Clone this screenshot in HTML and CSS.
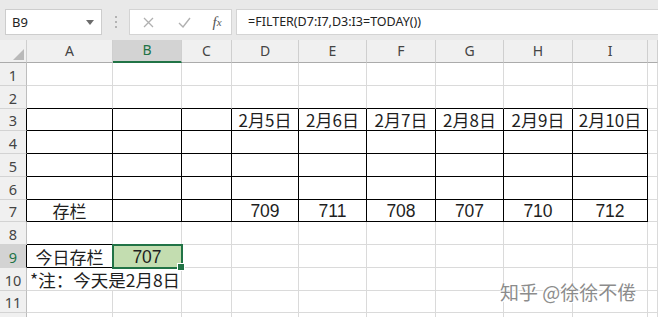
FILE: index.html
```html
<!DOCTYPE html>
<html lang="zh-CN">
<head>
    <meta charset="UTF-8">
    <title>FILTER</title>
    <link rel="stylesheet" href="styles.css">
</head>
<body>
    <div class="app">
        <div class="formula-bar">
            <div class="name-box">
                <span>B9</span>
                <svg class="drop" width="8" height="5" viewBox="0 0 8 5"><path d="M0 0h8L4 5z" fill="#6b6b6b"/></svg>
            </div>
            <div class="grip"><i></i><i></i><i></i></div>
            <div class="fx-buttons">
                <span class="btn">
                    <svg width="11" height="11" viewBox="0 0 11 11"><path d="M1 1l9 9M10 1l-9 9" stroke="#b0b0b0" stroke-width="1.3" fill="none"/></svg>
                </span>
                <span class="btn">
                    <svg width="13" height="11" viewBox="0 0 13 11"><path d="M1 6l4 4 7-9" stroke="#b0b0b0" stroke-width="1.4" fill="none"/></svg>
                </span>
                <span class="btn fx">f<sub>x</sub></span>
            </div>
            <div class="formula">=FILTER(D7:I7,D3:I3=TODAY())</div>
        </div>

        <div class="sheet">
            <div class="row head">
                <div class="corner"><svg width="11" height="11" viewBox="0 0 11 11"><path d="M11 0v11H0z" fill="#b9b9b9"/></svg></div>
                <div>A</div><div class="sel">B</div><div>C</div><div>D</div><div>E</div><div>F</div><div>G</div><div>H</div><div>I</div><div></div>
            </div>
            <div class="row">
                <div class="rh">1</div>
                <div></div><div></div><div></div><div></div><div></div><div></div><div></div><div></div><div></div><div></div>
            </div>
            <div class="row">
                <div class="rh">2</div>
                <div class="bb"></div><div class="bb"></div><div class="bb"></div><div class="bb"></div><div class="bb"></div><div class="bb"></div><div class="bb"></div><div class="bb"></div><div class="bb"></div><div></div>
            </div>
            <div class="row">
                <div class="rh br">3</div>
                <div class="bx"></div><div class="bx"></div><div class="bx"></div>
                <div class="bx">2月5日</div><div class="bx">2月6日</div><div class="bx">2月7日</div><div class="bx">2月8日</div><div class="bx">2月9日</div><div class="bx">2月10日</div><div></div>
            </div>
            <div class="row">
                <div class="rh br">4</div>
                <div class="bx"></div><div class="bx"></div><div class="bx"></div><div class="bx"></div><div class="bx"></div><div class="bx"></div><div class="bx"></div><div class="bx"></div><div class="bx"></div><div></div>
            </div>
            <div class="row">
                <div class="rh br">5</div>
                <div class="bx"></div><div class="bx"></div><div class="bx"></div><div class="bx"></div><div class="bx"></div><div class="bx"></div><div class="bx"></div><div class="bx"></div><div class="bx"></div><div></div>
            </div>
            <div class="row">
                <div class="rh br">6</div>
                <div class="bx"></div><div class="bx"></div><div class="bx"></div><div class="bx"></div><div class="bx"></div><div class="bx"></div><div class="bx"></div><div class="bx"></div><div class="bx"></div><div></div>
            </div>
            <div class="row">
                <div class="rh br">7</div>
                <div class="bx">存栏</div><div class="bx"></div><div class="bx"></div>
                <div class="bx num">709</div><div class="bx num">711</div><div class="bx num">708</div><div class="bx num">707</div><div class="bx num">710</div><div class="bx num">712</div><div></div>
            </div>
            <div class="row">
                <div class="rh">8</div>
                <div class="bb"></div><div></div><div></div><div></div><div></div><div></div><div></div><div></div><div></div><div></div>
            </div>
            <div class="row">
                <div class="rh br cur">9</div>
                <div class="bx">今日存栏</div><div class="active num">707</div><div></div><div></div><div></div><div></div><div></div><div></div><div></div><div></div>
            </div>
            <div class="row">
                <div class="rh">10</div>
                <div class="note">*注：今天是2月8日</div><div></div><div></div><div></div><div></div><div></div><div></div><div></div><div></div>
            </div>
            <div class="row">
                <div class="rh">11</div>
                <div></div><div></div><div></div><div></div><div></div><div></div><div></div><div></div><div></div><div></div>
            </div>
            <div class="row">
                <div class="rh"></div>
                <div></div><div></div><div></div><div></div><div></div><div></div><div></div><div></div><div></div><div></div>
            </div>
        </div>

        <div class="watermark">知乎 @徐徐不倦</div>
    </div>
</body>
</html>
```

FILE: styles.css
```css
*{
    margin: 0;
    padding: 0;
    box-sizing: border-box;
}
body{
    width: 658px;
    height: 317px;
    overflow: hidden;
    background: #fff;
    font-family: "Noto Sans", "Noto Sans CJK SC", sans-serif;
}
.app{
    position: relative;
    width: 658px;
    height: 317px;
    overflow: hidden;
}

/* formula bar */
.formula-bar{
    height: 40px;
    background: #e9e9e9;
    display: flex;
    align-items: flex-start;
    padding: 9px 0 0 5px;
}
.formula-bar .name-box{
    width: 97px;
    height: 26px;
    background: #fff;
    border: 1px solid #cdcdcd;
    display: flex;
    align-items: center;
    justify-content: space-between;
    padding: 0 7px 0 6px;
    font-size: 13px;
    color: #222;
}
.formula-bar .grip{
    width: 2px;
    margin: 7px 0 0 13px;
    display: flex;
    flex-direction: column;
    gap: 3px;
}
.formula-bar .grip i{
    display: block;
    width: 2px;
    height: 2px;
    background: #b3b3b3;
}
.formula-bar .fx-buttons{
    width: 103px;
    height: 26px;
    margin-left: 12px;
    background: #fff;
    border: 1px solid #d4d4d4;
    display: flex;
    align-items: center;
}
.formula-bar .btn{
    display: flex;
    justify-content: center;
    align-items: center;
    width: 36px;
}
.formula-bar .btn:nth-child(2){
    width: 37px;
}
.formula-bar .btn.fx{
    width: 28px;
    font-family: "Liberation Serif", serif;
    font-style: italic;
    font-size: 15px;
    color: #555;
}
.formula-bar .btn.fx sub{
    font-size: 11px;
    vertical-align: -1px;
}
.formula-bar .formula{
    flex: 1;
    height: 26px;
    margin-left: 4px;
    background: #fff;
    border: 1px solid #d4d4d4;
    border-right: none;
    padding-left: 11px;
    font-size: 12.5px;
    line-height: 24px;
    color: #222;
    white-space: nowrap;
}

/* sheet */
.sheet .row{
    display: grid;
    grid-template-columns: 27px 86px 69px 50px 67px 68px 69px 68px 69px 75px 10px;
    height: 22.75px;
}
.sheet .row > div{
    border-right: 1px solid #dadada;
    border-bottom: 1px solid #dadada;
    display: flex;
    align-items: flex-end;
    justify-content: center;
    white-space: nowrap;
    font-family: "Noto Sans CJK SC", sans-serif;
    font-size: 17px;
    line-height: 19px;
    padding-bottom: 1px;
    color: #1e1e1e;
}
.sheet .row > .num{
    font-family: "Liberation Sans", sans-serif;
    font-size: 17.5px;
    padding-bottom: 0;
}
.sheet .row.head{
    height: 23px;
}
.sheet .row.head > div{
    background: #f0f0f0;
    border-right: 1px solid #cfcfcf;
    border-bottom: 1px solid #ababab;
    font-family: "Noto Sans", sans-serif;
    font-size: 14px;
    line-height: 20px;
    color: #444;
}
.sheet .row.head > .corner{
    align-items: flex-end;
    justify-content: flex-end;
    padding: 0 2px 2px 0;
}
.sheet .row.head > .sel{
    background: #d3d3d3;
    color: #217346;
    border-bottom: 2px solid #217346;
}
.sheet .row > .rh{
    background: #f0f0f0;
    border-right-color: #bdbdbd;
    border-bottom-color: #d3d3d3;
    font-family: "Noto Sans", sans-serif;
    font-size: 14.5px;
    line-height: 18px;
    color: #444;
}
.sheet .row > .rh.cur{
    background: #d3d3d3;
    color: #217346;
}
.sheet .row > .bb{
    border-bottom-color: #000;
}
.sheet .row > .br{
    border-right-color: #000;
}
.sheet .row > .bx{
    border-right-color: #000;
    border-bottom-color: #000;
}
.sheet .row > .active{
    position: relative;
    background: #c3ddb0;
    outline: 2px solid #217346;
    outline-offset: -1px;
    color: #1e1e1e;
}
.sheet .row > .active::after{
    content: "";
    position: absolute;
    right: -4px;
    bottom: -4px;
    width: 6px;
    height: 6px;
    background: #217346;
    border: 1px solid #fff;
}
.sheet .row > .note{
    grid-column: span 2;
    justify-content: flex-start;
    padding-left: 3px;
    font-size: 17.5px;
}

.watermark{
    position: absolute;
    left: 500px;
    top: 278px;
    font-family: "Noto Sans CJK SC", sans-serif;
    font-size: 19px;
    color: #8c8c8c;
    text-shadow: 1px 1px 0 #fff, -1px -1px 0 #fff;
    white-space: nowrap;
}
```
